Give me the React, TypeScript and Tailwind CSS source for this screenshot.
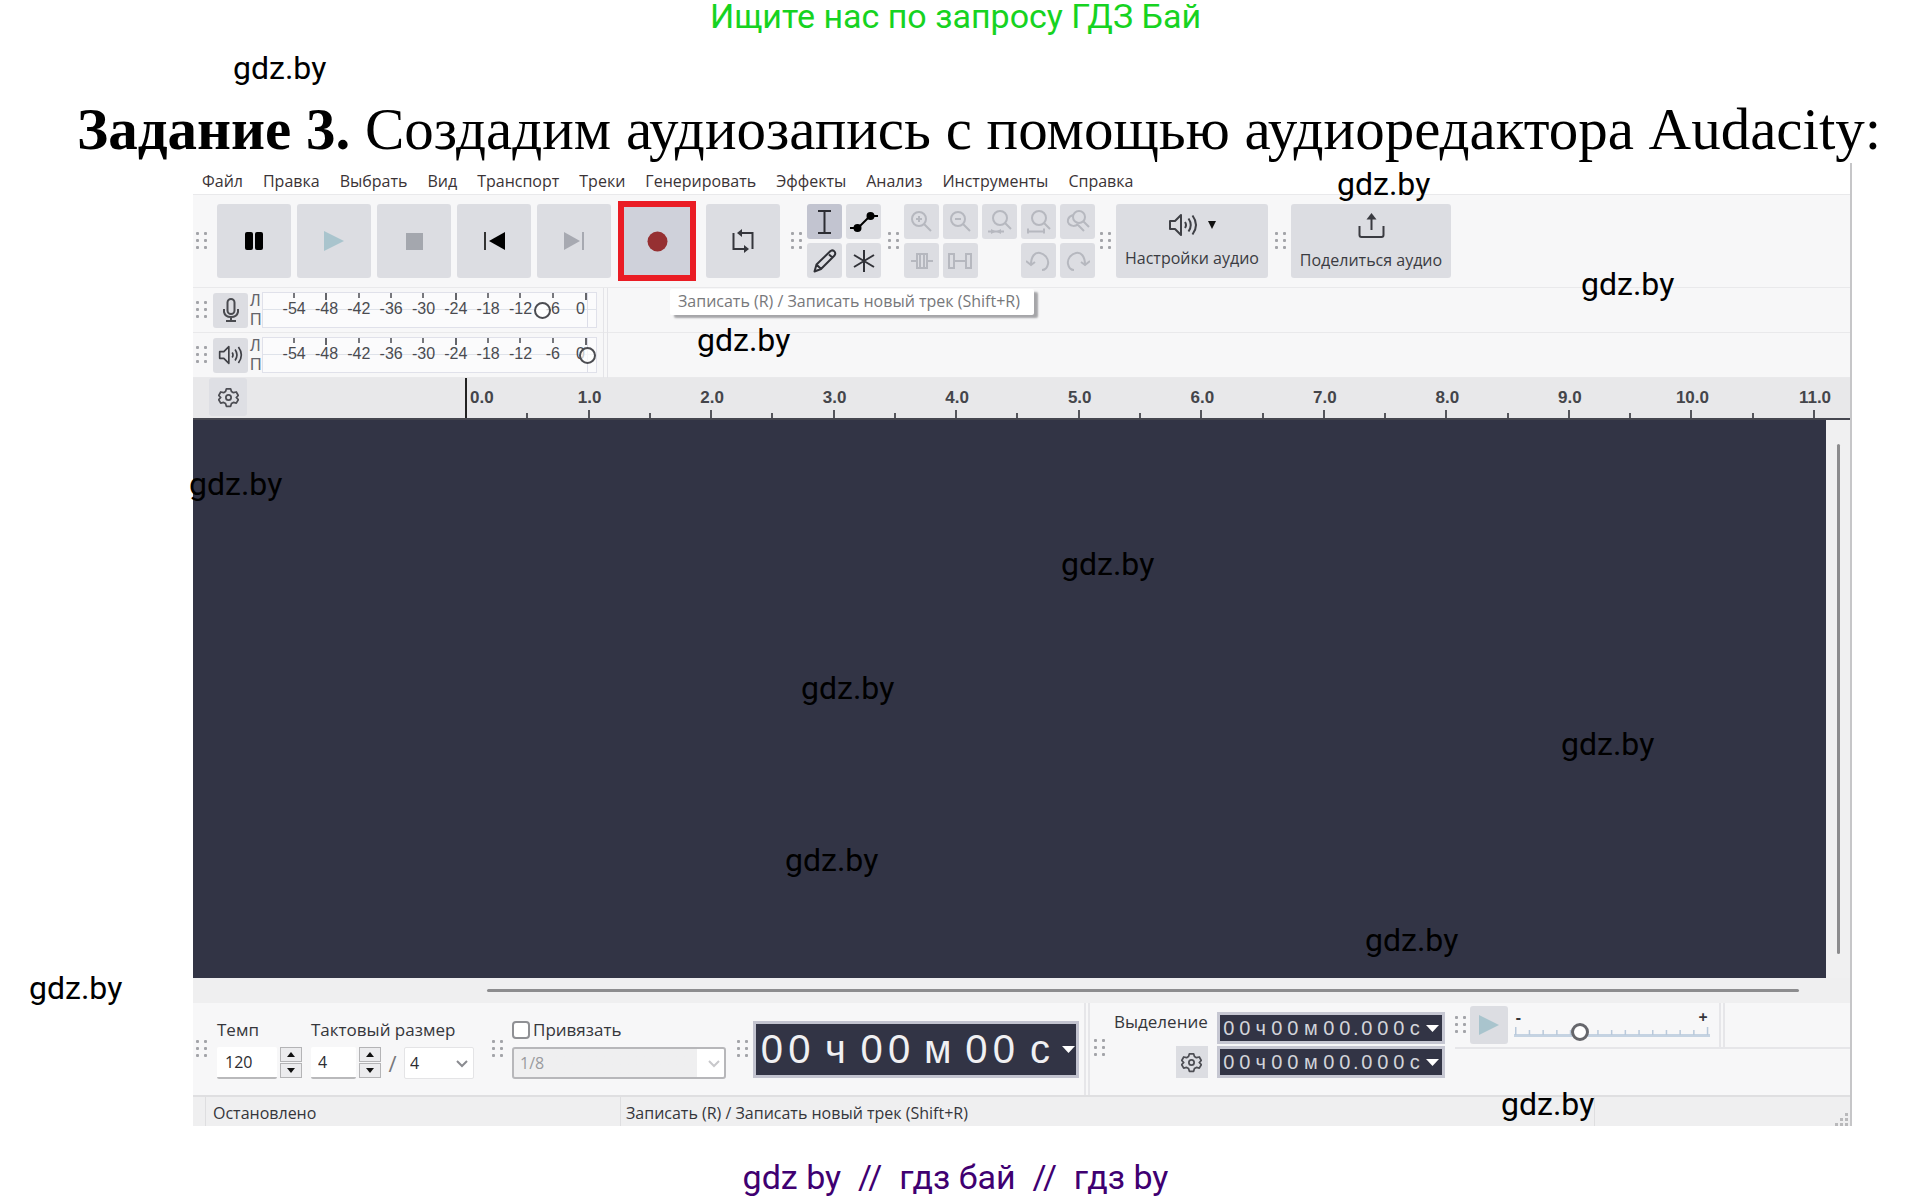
import React from "react";

const MENU = [
  "Файл",
  "Правка",
  "Выбрать",
  "Вид",
  "Транспорт",
  "Треки",
  "Генерировать",
  "Эффекты",
  "Анализ",
  "Инструменты",
  "Справка",
];

const MARKS = [
  { left: 233, top: 50 },
  { left: 1337, top: 166 },
  { left: 1581, top: 266 },
  { left: 697, top: 322 },
  { left: 189, top: 466 },
  { left: 1061, top: 546 },
  { left: 801, top: 670 },
  { left: 1561, top: 726 },
  { left: 785, top: 842 },
  { left: 1365, top: 922 },
  { left: 29, top: 970 },
  { left: 1501, top: 1086 },
];

const DB = ["-54", "-48", "-42", "-36", "-30", "-24", "-18", "-12", "-6"];
const SECONDS = ["1.0", "2.0", "3.0", "4.0", "5.0", "6.0", "7.0", "8.0", "9.0", "10.0", "11.0"];

function Grip() {
  return (
    <svg className="shrink-0" width="11" height="18" viewBox="0 0 11 18" fill="#a3a4a9" aria-hidden="true">
      {[0, 7, 14].map((y) => (
        <g key={y}>
          <rect x="0" y={y} width="3" height="3" rx="1" />
          <rect x="8" y={y} width="3" height="3" rx="1" />
        </g>
      ))}
    </svg>
  );
}

function Big({ label, children }: { label: string; children: React.ReactNode }) {
  return (
    <button
      type="button"
      aria-label={label}
      className="flex h-[74px] w-[74px] shrink-0 items-center justify-center rounded-[3px] bg-[#dcdde2]"
    >
      {children}
    </button>
  );
}

function Small({ label, active, children }: { label: string; active?: boolean; children: React.ReactNode }) {
  return (
    <button
      type="button"
      aria-label={label}
      className={
        active
          ? "flex h-[35px] w-[35px] items-center justify-center rounded-[3px] bg-[#c2c4d0]"
          : "flex h-[35px] w-[35px] items-center justify-center rounded-[3px] bg-[#dcdde2]"
      }
    >
      {children}
    </button>
  );
}

function Faint({ children }: { children: React.ReactNode }) {
  return (
    <svg width="25" height="25" viewBox="0 0 25 25" fill="none" stroke="#b6b8bf" strokeWidth="2" aria-hidden="true">
      {children}
    </svg>
  );
}

function Gear() {
  return (
    <svg width="21" height="21" viewBox="0 0 24 24" fill="none" stroke="#4d4e54" strokeWidth="2" strokeLinejoin="round" aria-hidden="true">
      <path d="M9.600 2h4.800l1 3.200 2.200 1.300 3.300-.8 2.300 4-2.300 2.300 2.300 2.400-2.300 4-3.300-.8-2.200 1.300-1 3.100H9.600l-1-3.100-2.200-1.300-3.300.8-2.300-4L3.100 12 .8 9.700l2.300-4 3.300.8 2.200-1.300z" />
      <circle cx="12" cy="12" r="3" />
    </svg>
  );
}

function Speaker({ width, height }: { width: number; height: number }) {
  return (
    <svg width={width} height={height} viewBox="0 0 30 24" fill="none" stroke="#3f4046" strokeWidth="2" aria-hidden="true">
      <path d="M2 8v8h5l6 6V2L7 8z" strokeLinejoin="round" />
      <path d="M17 9q2 3 0 6M20.500 5.500q4.500 6.500 0 13M24.500 2.500q7 9.500 0 19" />
    </svg>
  );
}

function Meter({ label, value, icon }: { label: string; value: number; icon: React.ReactNode }) {
  return (
    <div className="flex h-[45px] items-center border-b border-[#e9e9eb] pl-[3px]">
      <Grip />
      <button type="button" aria-label={label} className="ml-[6px] flex h-[35px] w-[35px] items-center justify-center rounded-[3px] bg-[#dcdde2]">
        {icon}
      </button>
      <div className="ml-[2px] flex w-3 flex-col text-[16px] leading-[19px] text-[#63646a]">
        <span>Л</span>
        <span>П</span>
      </div>
      <div className="relative flex h-[36px] w-[335px] border border-[#e0e1ea] bg-[#fbfbfc] pl-[15px]">
        <span className="absolute inset-x-0 top-4 h-px bg-[#dfe3ea]" />
        <span className="absolute inset-y-0 right-[8px] w-px bg-[#dcdde8]" />
        <div className="relative grid w-[291px] grid-cols-9 text-[16px] leading-[18px] text-[#4a4b50]">
          {DB.map((d, i) => (
            <div key={d} className="flex flex-col items-center gap-[2px]">
              <span className={i === 1 || i === 5 ? "mb-[-2px] h-[7px] w-[2px] bg-[#65666b]" : "h-[5px] w-[2px] bg-[#77787d]"} />
              <span>{d}</span>
            </div>
          ))}
        </div>
        <div className="relative flex w-[18px] flex-col items-end text-[16px] leading-[18px] text-[#4a4b50]">
          <span className="h-[7px] w-[2px] bg-[#65666b]" />
          <span className="mr-[2px]">0</span>
        </div>
        <input
          type="range"
          min={0}
          max={1000}
          defaultValue={value}
          aria-label={label}
          className="absolute inset-x-0 top-[9px] m-0 h-[17px] w-full cursor-pointer appearance-none bg-transparent [&::-webkit-slider-thumb]:h-[17px] [&::-webkit-slider-thumb]:w-[17px] [&::-webkit-slider-thumb]:appearance-none [&::-webkit-slider-thumb]:rounded-full [&::-webkit-slider-thumb]:border-2 [&::-webkit-slider-thumb]:border-[#4c4d52] [&::-webkit-slider-thumb]:bg-white/70"
        />
      </div>
      <div className="ml-[6px] h-[45px] w-[5px] border-x border-[#e4e4e8]" />
    </div>
  );
}

function Spin({ label, value, wide }: { label: string; value: string; wide?: boolean }) {
  return (
    <div className="flex items-center gap-[3px]">
      <input
        id={label}
        defaultValue={value}
        className={
          wide
            ? "h-8 w-[60px] rounded-[2px] border-b-2 border-[#b9b9bb] bg-white pl-2 text-[16px] text-[#2c2c30]"
            : "h-8 w-[45px] rounded-[2px] border-b-2 border-[#b9b9bb] bg-white pl-[7px] text-[16px] text-[#2c2c30]"
        }
      />
      <div className="flex flex-col gap-px">
        <button type="button" aria-label="Увеличить" className="flex h-[15px] w-[22px] items-center justify-center border border-[#b4b4b6] bg-[#ececee]">
          <svg width="8" height="5" aria-hidden="true"><path d="M0 5L4 0l4 5z" fill="#111" /></svg>
        </button>
        <button type="button" aria-label="Уменьшить" className="flex h-[15px] w-[22px] items-center justify-center border border-[#b4b4b6] bg-[#ececee]">
          <svg width="8" height="5" aria-hidden="true"><path d="M0 0L4 5l4-5z" fill="#111" /></svg>
        </button>
      </div>
    </div>
  );
}

function Chevron({ color }: { color: string }) {
  return (
    <svg className="pointer-events-none absolute top-[13px] right-[6px]" width="12" height="8" fill="none" stroke={color} strokeWidth="2" aria-hidden="true">
      <path d="M1 1l5 5 5-5" />
    </svg>
  );
}

function SmallTime({ label }: { label: string }) {
  return (
    <div role="group" aria-label={label} className="flex h-8 w-[228px] items-center border-[3px] border-[#c6c7d2] bg-[#323445] pl-px font-['Liberation_Sans',sans-serif] text-[20px] text-[#d3d4da]">
      {"00ч00м00.000с".split("").map((c, i) => (
        <span
          key={i}
          className={c === "." ? "flex w-[6px] justify-center" : c === "м" ? "flex w-5 justify-center" : "flex w-4 justify-center"}
        >
          {c}
        </span>
      ))}
      <button type="button" aria-label="Формат времени" className="ml-auto flex h-full w-[18px] items-center justify-center">
        <svg width="13" height="7" aria-hidden="true"><path d="M0 0h13L6.500 7z" fill="#fff" /></svg>
      </button>
    </div>
  );
}

function BigTime() {
  const cells = "00ч00м00с".split("");
  return (
    <div role="group" aria-label="Время" className="flex h-[57px] w-[326px] items-center border-[3px] border-[#c2c3cf] bg-[#323445] pl-[2px] font-['Liberation_Sans',sans-serif] text-[40px] leading-none text-[#f0f0f2]">
      {cells.map((c, i) => (
        <span key={i} className={c === "0" ? "flex w-7 justify-center" : c === "м" ? "flex w-[50px] justify-center" : "flex w-[45px] justify-center"}>
          {c}
        </span>
      ))}
      <button type="button" aria-label="Формат времени" className="ml-auto flex h-full w-[14px] items-center justify-start">
        <svg width="13" height="7" aria-hidden="true"><path d="M0 0h13L6.500 7z" fill="#fff" /></svg>
      </button>
    </div>
  );
}

function Toolbar() {
  return (
    <div className="flex h-[94px] items-center border-y border-[#e9e9eb] pl-[3px]">
      <Grip />
      <div className="ml-[10px] flex items-center gap-[6px]">
        <Big label="Пауза">
          <svg width="18" height="18"><rect width="8" height="18" rx="2" /><rect x="10" width="8" height="18" rx="2" /></svg>
        </Big>
        <Big label="Воспроизвести">
          <svg width="20" height="20"><path d="M0 0l20 10L0 20z" fill="#a9c4cd" /></svg>
        </Big>
        <Big label="Остановить">
          <svg width="17" height="17"><rect width="17" height="17" fill="#a4a7ae" /></svg>
        </Big>
        <Big label="К началу">
          <svg width="21" height="18"><rect width="2" height="18" fill="#333" /><path d="M21 0v18L5 9z" /></svg>
        </Big>
        <Big label="В конец">
          <svg width="21" height="18" fill="#a7a9b1"><path d="M0 0v18L16 9z" /><rect x="18" width="2" height="18" /></svg>
        </Big>
        <button
          type="button"
          aria-label="Записать"
          className="mr-1 ml-px flex h-20 w-[78px] items-center justify-center border-[6px] border-[#ea1c24] bg-[#cfd1da]"
        >
          <svg width="21" height="21"><circle cx="10.500" cy="10.500" r="10" fill="#963032" /></svg>
        </button>
        <Big label="Зациклить">
          <svg width="22" height="24" viewBox="0 0 22 24" fill="none" stroke="#35363c" strokeWidth="2">
            <path d="M1.500 4v16H14M20.500 20V4H8" />
            <path d="M10 0L5 4l5 4zM12 16l5 4-5 4z" fill="#35363c" stroke="none" />
          </svg>
        </Big>
      </div>
      <div className="ml-[11px]"><Grip /></div>
      <div className="ml-[5px] grid grid-cols-2 gap-1">
        <Small label="Выделение" active>
          <svg width="13" height="24" fill="none" stroke="#2c2d33" strokeWidth="2"><path d="M0 1h13M0 23h13M6.500 1v22" /></svg>
        </Small>
        <Small label="Огибающая">
          <svg width="28" height="20" viewBox="0 0 28 20" stroke="#000" strokeWidth="2"><path d="M0 16h8L20 4h8" fill="none" /><circle cx="7.500" cy="16" r="3" /><circle cx="20.500" cy="4" r="3" /></svg>
        </Small>
        <Small label="Рисование">
          <svg width="24" height="24" viewBox="0 0 24 24" fill="none" stroke="#303137" strokeWidth="2" strokeLinejoin="round"><path d="M1.500 22.500l2-7L17.500 2q2.500-1.500 4 .5t0 4L8 20z M3.500 15.500L8 20M16 5.500L20 9" /></svg>
        </Small>
        <Small label="Мультиинструмент">
          <svg width="22" height="22" viewBox="0 0 22 22" stroke="#303137" strokeWidth="2"><path d="M11 0v22M1 5l20 12M21 5L1 17" /></svg>
        </Small>
      </div>
      <div className="ml-[7px]"><Grip /></div>
      <div className="ml-[5px] grid grid-cols-5 gap-1">
        <Small label="Приблизить"><Faint><circle cx="10" cy="10" r="7" /><path d="M15 15l7 7M7 10h6M10 7v6" /></Faint></Small>
        <Small label="Отдалить"><Faint><circle cx="10" cy="10" r="7" /><path d="M15 15l7 7M7 10h6" /></Faint></Small>
        <Small label="По выделению"><Faint><circle cx="13" cy="9" r="7" /><path d="M18 14l6 6M1 22.500h16" /><path d="M4 20l5 2.500L4 25zM14 20l-5 2.500 5 2.500z" fill="#b6b8bf" stroke="none" /></Faint></Small>
        <Small label="По проекту"><Faint><circle cx="13" cy="9" r="7" /><path d="M18 14l6 6M2 22.500h16M2 19.500v5M18 19.500v5" /></Faint></Small>
        <Small label="Переключить масштаб"><Faint><circle cx="14" cy="8" r="6" /><path d="M18 12l6 6M8 6C2 8 2 13 4 15s6 3 9 0M13 16l6 6" /></Faint></Small>
        <Small label="Обрезать"><Faint><path d="M2 13h5M19 13h5M8 6v14h3V6zM11 6v14h4V6zM15 6v14h3V6z" /></Faint></Small>
        <Small label="Заглушить"><Faint><path d="M1 6v14h5V6zM18 6v14h5V6zM7 13h10" /></Faint></Small>
        <span />
        <Small label="Отменить"><Faint><path d="M5 17C5 8 9 4 14 5s9 6 8 11-4 6-6 6M0 13l5 4 4-3" /></Faint></Small>
        <Small label="Повторить"><Faint><path d="M20 17C20 8 16 4 11 5s-9 6-8 11 4 6 6 6M25 13l-5 4-4-3" /></Faint></Small>
      </div>
      <div className="ml-[5px]"><Grip /></div>
      <button type="button" className="ml-[5px] flex h-[74px] w-[152px] flex-col items-center justify-between rounded-[3px] bg-[#dcdde2] pt-[9px] pb-2 text-[16px] leading-6 text-[#3a3b41]">
        <span className="flex items-center gap-[10px]">
          <Speaker width={30} height={24} />
          <svg width="8" height="8"><path d="M0 0h8L4 8z" fill="#111" /></svg>
        </span>
        <span className="whitespace-nowrap">Настройки аудио</span>
      </button>
      <div className="ml-[7px]"><Grip /></div>
      <button type="button" className="ml-[5px] flex h-[74px] w-[160px] flex-col items-center justify-between rounded-[3px] bg-[#dcdde2] pt-[9px] pb-[6px] text-[16px] leading-6 text-[#3a3b41]">
        <svg width="27" height="26" viewBox="0 0 27 26" fill="none" stroke="#3a3b41" strokeWidth="2"><path d="M1.500 13v9q0 2 2 2h20q2 0 2-2v-9M13.500 17V2" /><path d="M8.500 6.500l5-6.500 5 6.500z" fill="#3a3b41" stroke="none" /></svg>
        <span className="whitespace-nowrap">Поделиться аудио</span>
      </button>
    </div>
  );
}

function Ruler() {
  return (
    <div className="flex h-[42px] border-b-2 border-[#45464f] bg-[#e8e8ea] font-['Liberation_Sans',sans-serif]">
      <div className="w-[272px] shrink-0 pl-4">
        <button type="button" aria-label="Параметры шкалы" className="flex h-[38px] w-[38px] items-center justify-center rounded-[3px] bg-[#dedfe4]">
          <Gear />
        </button>
      </div>
      <div className="flex grow border-l-2 border-[#222] pr-[35px] text-[17px] leading-5 font-bold text-[#44454a]">
        <span className="mt-[10px] mr-[-3px] w-[3px] pl-[3px] whitespace-nowrap">0.0</span>
        <div className="grid grow grid-cols-11">
          {SECONDS.map((s) => (
            <div key={s} className="flex flex-col justify-between pt-[10px]">
              <div className="flex justify-end">
                <span className="flex w-0 justify-center whitespace-nowrap">{s}</span>
              </div>
              <div className="flex items-end">
                <span className="h-[5px] w-1/2 border-r-2 border-[#55565c]" />
                <span className="h-2 w-1/2 border-r-2 border-[#55565c]" />
              </div>
            </div>
          ))}
        </div>
      </div>
    </div>
  );
}

function BottomBar() {
  return (
    <div className="flex h-[92px] bg-[#f7f7f8]">
      <div className="flex items-center pb-[2px] pl-[3px]">
        <div className="mt-[2px]"><Grip /></div>
        <div className="ml-[10px] flex flex-col gap-[5px]">
          <label htmlFor="tempo" className="text-[17px] leading-6">Темп</label>
          <Spin label="tempo" value="120" wide />
        </div>
        <div className="ml-[9px] flex w-[163px] flex-col gap-[5px]">
          <label htmlFor="beats" className="text-[17px] leading-6 whitespace-nowrap">Тактовый размер</label>
          <div className="flex items-center">
            <Spin label="beats" value="4" />
            <span className="w-[23px] text-center text-[22px] leading-8 text-[#77787c]">/</span>
            <div className="relative">
              <select aria-label="Длительность доли" className="h-8 w-[70px] appearance-none rounded-[2px] border border-[#e4e4e6] bg-white pl-[5px] text-[16px] text-[#2c2c30]">
                <option>4</option>
              </select>
              <Chevron color="#8a8b90" />
            </div>
          </div>
        </div>
        <div className="mt-[2px] ml-[18px]"><Grip /></div>
        <div className="ml-[9px] flex flex-col gap-[5px]">
          <label className="flex items-center gap-[3px] text-[17px] leading-6">
            <input type="checkbox" className="h-[18px] w-[18px] appearance-none rounded-[4px] border-2 border-[#8f9094] bg-white" />
            Привязать
          </label>
          <div className="relative">
            <select disabled aria-label="Привязка" className="h-8 w-[214px] appearance-none rounded-[3px] border-2 border-[#b7b7ba] bg-linear-to-r from-[#efeff0] from-87% to-white to-87% pl-[6px] text-[16px] text-[#9a9b9e] opacity-100">
              <option>1/8</option>
            </select>
            <Chevron color="#c8c8cb" />
          </div>
        </div>
        <div className="mt-[2px] ml-[11px]"><Grip /></div>
        <div className="mt-[2px] ml-[5px]"><BigTime /></div>
      </div>
      <div className="ml-[5px] w-[6px] shrink-0 border-x-2 border-[#e6e6e9]" />
      <div className="flex items-start pl-[4px]">
        <div className="mt-9"><Grip /></div>
        <div className="mt-[7px] ml-[9px] flex flex-col items-end gap-[12px]">
          <span className="text-[17px] leading-6">Выделение</span>
          <button type="button" aria-label="Параметры выделения" className="flex h-8 w-8 items-center justify-center bg-[#dcdde2]">
            <Gear />
          </button>
        </div>
        <div className="mt-[9px] ml-[9px] flex flex-col gap-[2px]">
          <SmallTime label="Начало выделения" />
          <SmallTime label="Конец выделения" />
        </div>
      </div>
      <div className="ml-[10px] grow">
        <div className="flex h-[46px] items-center border-b-2 border-[#e6e6e9]">
          <Grip />
          <button type="button" aria-label="Воспроизвести на скорости" className="ml-1 flex h-[38px] w-[38px] items-center justify-center rounded-[3px] bg-[#dcdde2]">
            <svg width="20" height="20"><path d="M0 0l20 10L0 20z" fill="#a9c4cd" /></svg>
          </button>
          <div className="relative ml-[6px] w-[196px]">
            <div className="flex justify-between px-[2px] text-[16px] leading-4 font-bold">
              <span>-</span>
              <span>+</span>
            </div>
            <svg className="block" width="196" height="16" aria-hidden="true">
              <path d="M0 10.500h196" stroke="#c5d3e2" strokeWidth="3" />
              {Array.from({ length: 15 }, (_, i) => (
                <rect key={i} x={1 + i * 13.700} y={i === 0 || i === 14 ? 2 : 5} width="1.500" height={i === 0 || i === 14 ? 8 : 5} fill="#b9c9db" />
              ))}
            </svg>
            <input
              type="range"
              min={0}
              max={1000}
              defaultValue={320}
              aria-label="Скорость воспроизведения"
              className="absolute bottom-0 left-0 m-0 h-[18px] w-full appearance-none bg-transparent [&::-webkit-slider-thumb]:h-[18px] [&::-webkit-slider-thumb]:w-[18px] [&::-webkit-slider-thumb]:appearance-none [&::-webkit-slider-thumb]:rounded-full [&::-webkit-slider-thumb]:border-[3px] [&::-webkit-slider-thumb]:border-[#66676c] [&::-webkit-slider-thumb]:bg-white"
            />
          </div>
          <div className="ml-[9px] h-full w-[6px] border-x-2 border-[#e6e6e9]" />
        </div>
      </div>
    </div>
  );
}

export default function App() {
  return (
    <div className="relative min-h-screen overflow-hidden bg-white">
      <p className="text-center font-['Roboto',sans-serif] text-[34px] leading-8 text-[#16d321]">
        Ищите нас по запросу ГДЗ Бай
      </p>
      <h1 className="mt-16 pl-[77px] font-['Liberation_Serif',serif] text-[59px] leading-[67px] whitespace-nowrap text-black">
        <b>Задание 3.</b> Создадим аудиозапись с помощью аудиоредактора Audacity:
      </h1>

      <main className="relative mr-[59px] ml-[193px] border-r-2 border-[#c6c6c8] bg-[#f7f7f8] font-['Open_Sans',sans-serif] text-[#35363b]">
        <nav className="flex h-[31px] items-end gap-5 bg-white pl-[9px] text-[16px] leading-[26px] text-[#3a3336]">
          {MENU.map((m) => (
            <button key={m} type="button">{m}</button>
          ))}
        </nav>
        <Toolbar />
        <div className="relative font-['Liberation_Sans',sans-serif]">
          <Meter
            label="Уровень записи"
            value={857}
            icon={
              <svg width="16" height="24" viewBox="0 0 16 24" fill="none" stroke="#4a4b50" strokeWidth="2">
                <rect x="4.500" y="1" width="7" height="15" rx="3.500" />
                <path d="M1 11v3q1 5 7 5t7-5v-3M8 19v4M3 23h10" />
              </svg>
            }
          />
          <Meter label="Уровень воспроизведения" value={1000} icon={<Speaker width={25} height={20} />} />
          <div role="tooltip" className="absolute top-px left-[477px] rounded-[2px] bg-white pr-[14px] pb-[2px] pl-2 font-['Open_Sans',sans-serif] text-[16px] leading-6 whitespace-nowrap text-[#77787b] shadow-[4px_3px_2px_#a5a5a8]">
            Записать (R) / Записать новый трек (Shift+R)
          </div>
        </div>
        <Ruler />
        <div className="flex">
          <div className="h-[558px] grow bg-[#323445]" />
          <div className="flex w-6 justify-center bg-[#f0f0f1] pt-6 pb-6">
            <div className="w-[3px] rounded bg-[#8c8c8e]" />
          </div>
        </div>
        <div className="flex h-[25px] items-center bg-[#efeff0] pr-[51px] pl-[294px]">
          <div className="h-[3px] grow rounded bg-[#8c8c8e]" />
        </div>
        <BottomBar />
        <footer className="flex h-[31px] items-center border-t-2 border-[#dfdfe1] bg-[#efeff0] text-[16px] leading-6">
          <span className="ml-3 flex h-full w-[415px] items-center border-l border-[#dedee0] pt-[2px] pl-[7px]">Остановлено</span>
          <span className="flex h-full w-[975px] items-center border-x border-[#dedee0] pt-[2px] pl-[5px]">Записать (R) / Записать новый трек (Shift+R)</span>
          <svg className="mt-auto ml-auto" width="15" height="15" fill="#b9b9bb" aria-hidden="true">
            <rect x="10" y="2" width="3" height="3" /><rect x="10" y="7" width="3" height="3" /><rect x="5" y="7" width="3" height="3" />
            <rect x="10" y="12" width="3" height="3" /><rect x="5" y="12" width="3" height="3" /><rect x="0" y="12" width="3" height="3" />
          </svg>
        </footer>
      </main>

      <p className="mt-8 text-center font-['Roboto',sans-serif] text-[34px] leading-[38px] whitespace-pre text-[#3f0071]">
        gdz by  //  гдз бай  //  гдз by
      </p>

      {MARKS.map((m) => (
        <span
          key={m.top}
          className="pointer-events-none absolute font-['Roboto',sans-serif] text-[32px] leading-9 text-black"
          style={{ left: m.left, top: m.top }}
        >
          gdz.by
        </span>
      ))}
    </div>
  );
}
